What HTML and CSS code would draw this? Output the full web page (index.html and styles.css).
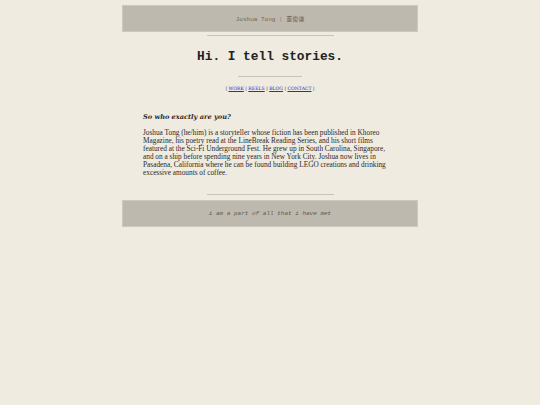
FILE: index.html
```html
<!DOCTYPE html>
<html lang="en">
<head>
<meta charset="utf-8">
<title>Joshua Tong</title>
<link rel="stylesheet" href="styles.css">
</head>
<body>
<div class="page">
  <header class="bar top">
    <span class="name">Joshua Tong <span class="sep">|</span> <span class="cjk">董俊谦</span></span>
  </header>
  <hr class="rule wide">
  <h1 class="title">Hi. I tell stories.</h1>
  <hr class="rule short">
  <nav class="nav">| <a href="#">WORK</a> | <a href="#">REELS</a> | <a href="#">BLOG</a> | <a href="#">CONTACT</a> |</nav>
  <section class="about">
    <h2 class="q">So who exactly are you?</h2>
    <p class="bio">Joshua Tong (he/him) is a storyteller whose fiction has been published in Khoreo Magazine, his poetry read at the LineBreak Reading Series, and his short films featured at the Sci-Fi Underground Fest. He grew up in South Carolina, Singapore, and on a ship before spending nine years in New York City. Joshua now lives in Pasadena, California where he can be found building LEGO creations and drinking excessive amounts of coffee.</p>
  </section>
  <hr class="rule wide foot-rule">
  <footer class="bar bottom">
    <span class="motto">i am a part of all that i have met</span>
  </footer>
</div>
</body>
</html>
```
FILE: styles.css
```css
html, body {
  margin: 0;
  padding: 0;
  background: #efebe0;
}
body {
  font-family: "Liberation Serif", Georgia, serif;
  color: #2a2a2a;
}
.page {
  width: 296px;
  margin: 0 auto;
  padding-top: 5px;
  display: flex;
  flex-direction: column;
  align-items: center;
}
.bar {
  box-sizing: border-box;
  width: 296px;
  height: 27px;
  background: #bdb9ae;
  border: 1px solid #cdc9bf;
  display: flex;
  align-items: center;
  justify-content: center;
  font-family: "Liberation Mono", "Noto Sans CJK SC", monospace;
  font-size: 6px;
  font-style: normal;
  color: #6b675f;
}
.cjk {
  font-family: "Noto Sans CJK SC", sans-serif;
  font-size: 6px;
}
.sep { color: #8a867d; }
.rule {
  border: 0;
  height: 1px;
  background: #c8c4ba;
  margin: 0;
}
.rule.wide { width: 127px; margin-top: 3px; }
.title {
  margin: 13px 0 0;
  font-family: "Liberation Mono", monospace;
  font-weight: bold;
  font-size: 12.8px;
  line-height: 15px;
  color: #222;
}
.rule.short { width: 64px; margin-top: 12px; }
.nav {
  margin-top: 8px;
  font-family: "DejaVu Serif", serif;
  font-size: 4.6px;
  line-height: 7px;
  color: #222;
}
.nav a { color: #2a2ac8; }
.about {
  align-self: stretch;
  padding: 0 21px;
  margin-top: 21px;
}
.q {
  margin: 0;
  font-family: "DejaVu Serif", serif;
  font-size: 6.6px;
  font-style: italic;
  font-weight: bold;
  line-height: 9px;
}
.bio {
  margin: 7px 0 0;
  font-size: 7.3px;
  line-height: 8px;
}
.rule.foot-rule { margin-top: 17px; }
.bottom {
  margin-top: 5px;
}
.motto {
  font-style: italic;
  font-size: 6px;
  color: #5e5a52;
}
```
